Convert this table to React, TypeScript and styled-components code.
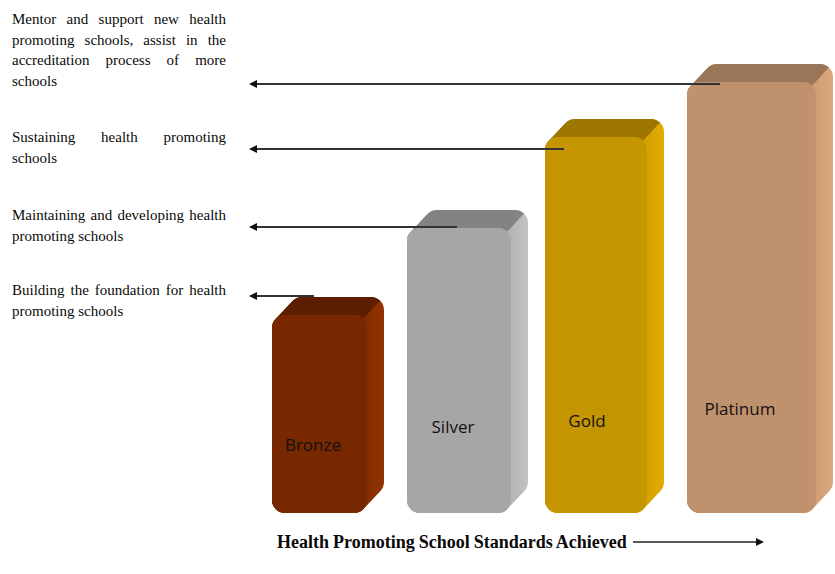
import React from "react";
import styled, { createGlobalStyle } from "styled-components";

const GlobalStyle = createGlobalStyle`
  html, body {
    margin: 0;
    padding: 0;
    background: #ffffff;
  }
  body {
    width: 835px;
    height: 574px;
    overflow: hidden;
    font-family: "Liberation Serif", "Times New Roman", serif;
  }
`;

const Page = styled.div`
  width: 835px;
  height: 574px;
  display: flex;
  flex-direction: column;
`;

const Figure = styled.div`
  display: grid;
  grid-template-columns: 236px 599px;
  height: 520px;
`;

const Notes = styled.div`
  display: flex;
  flex-direction: column;
  padding: 9px 0 0 12px;
`;

const Note = styled.p<{ $gap: number }>`
  margin: ${({ $gap }) => $gap}px 0 0;
  width: 214px;
  font-size: 15px;
  line-height: 20.5px;
  text-align: justify;
  color: #0a0a0a;
`;

const Chart = styled.svg`
  display: block;
`;

const CaptionRow = styled.div`
  display: flex;
  align-items: center;
  gap: 6px;
  padding: 13px 0 0 277px;
`;

const Caption = styled.span`
  font-weight: bold;
  font-size: 18px;
  line-height: 18px;
  word-spacing: -0.5px;
  color: #0a0a0a;
`;

const BarLabel = styled.text`
  font-family: "Open Sans", "Noto Sans", sans-serif;
  font-size: 17px;
  fill: #121212;
`;

type BarSpec = {
  id: string;
  label: string;
  x: number;
  top: number;
  w: number;
  front: string;
  topFace: string;
  sideDark: string;
  sideLight: string;
  labelX: number;
  labelY: number;
};

const BOTTOM = 513;
const R = 13;
const DX = 17;
const DY = -18;

const bars: BarSpec[] = [
  {
    id: "bronze",
    label: "Bronze",
    x: 272,
    top: 315,
    w: 95,
    front: "#772800",
    topFace: "#5b1f00",
    sideDark: "#802c00",
    sideLight: "#923200",
    labelX: 313,
    labelY: 451,
  },
  {
    id: "silver",
    label: "Silver",
    x: 407,
    top: 228,
    w: 104,
    front: "#a6a6a6",
    topFace: "#838383",
    sideDark: "#b0b0b0",
    sideLight: "#c2c2c2",
    labelX: 453,
    labelY: 433,
  },
  {
    id: "gold",
    label: "Gold",
    x: 545,
    top: 137,
    w: 102,
    front: "#c49500",
    topFace: "#9c7600",
    sideDark: "#d19f00",
    sideLight: "#e3ab00",
    labelX: 587,
    labelY: 427,
  },
  {
    id: "platinum",
    label: "Platinum",
    x: 687,
    top: 82,
    w: 129,
    front: "#c0916d",
    topFace: "#9b7557",
    sideDark: "#cc9a73",
    sideLight: "#dca97f",
    labelX: 740,
    labelY: 415,
  },
];

const arrows = [
  { y: 84, end: 720 },
  { y: 149, end: 564 },
  { y: 227, end: 457 },
  { y: 296, end: 314 },
];

const pts = (list: number[][]) => list.map((p) => p.join(",")).join(" ");

const Bar = ({ bar }: { bar: BarSpec }) => {
  const { x, top, w } = bar;
  const hull = [
    [x + R, top + R],
    [x + R + DX, top + R + DY],
    [x + w - R + DX, top + R + DY],
    [x + w - R + DX, BOTTOM - R + DY],
    [x + w - R, BOTTOM - R],
    [x + R, BOTTOM - R],
  ];
  // the top face ends where the front's top-right edge runs back in depth
  const topClip = [
    [x - 40, top + R],
    [x + w - R, top + R],
    [x + w - R + DX * 3, top + R + DY * 3],
    [x - 40, top + R + DY * 3],
  ];

  return (
    <g>
      <defs>
        <linearGradient
          id={`side-${bar.id}`}
          gradientUnits="userSpaceOnUse"
          x1={x + w - 6}
          y1={0}
          x2={x + w + DX}
          y2={0}
        >
          <stop offset="0" stopColor={bar.sideDark} />
          <stop offset="1" stopColor={bar.sideLight} />
        </linearGradient>
        <linearGradient
          id={`front-${bar.id}`}
          gradientUnits="userSpaceOnUse"
          x1={x}
          y1={0}
          x2={x + w}
          y2={0}
        >
          <stop offset="0" stopColor={bar.front} />
          <stop offset="0.88" stopColor={bar.front} />
          <stop offset="1" stopColor={bar.front} stopOpacity="0.88" />
        </linearGradient>
        <clipPath id={`top-${bar.id}`}>
          <polygon points={pts(topClip)} />
        </clipPath>
      </defs>
      <polygon
        points={pts(hull)}
        fill={`url(#side-${bar.id})`}
        stroke={`url(#side-${bar.id})`}
        strokeWidth={2 * R}
        strokeLinejoin="round"
      />
      <polygon
        points={pts(hull)}
        fill={bar.topFace}
        stroke={bar.topFace}
        strokeWidth={2 * R}
        strokeLinejoin="round"
        clipPath={`url(#top-${bar.id})`}
      />
      <rect x={x} y={top} width={w} height={BOTTOM - top} rx={R} fill={bar.sideDark} />
      <rect
        x={x}
        y={top}
        width={w}
        height={BOTTOM - top}
        rx={R}
        fill={`url(#front-${bar.id})`}
      />
      <BarLabel x={bar.labelX} y={bar.labelY} textAnchor="middle">
        {bar.label}
      </BarLabel>
    </g>
  );
};

const LeftArrow = ({ y, end }: { y: number; end: number }) => (
  <g>
    <line x1={255} y1={y} x2={end} y2={y} stroke="#4a4a4a" strokeWidth={2} />
    <line x1={255} y1={y} x2={end} y2={y} stroke="#111111" strokeWidth={0.8} />
    <polygon points={`249,${y} 257,${y - 4} 257,${y + 4}`} fill="#111111" />
  </g>
);

const notes = [
  { gap: 0, text: "Mentor and support new health promoting schools, assist in the accreditation process of more schools" },
  { gap: 36, text: "Sustaining health promoting schools" },
  { gap: 37, text: "Maintaining and developing health promoting schools" },
  { gap: 34, text: "Building the foundation for health promoting schools" },
];

const App = () => {
  return (
    <Page>
      <GlobalStyle />
      <Figure>
        <Notes>
          {notes.map((n) => (
            <Note key={n.text} $gap={n.gap}>
              {n.text}
            </Note>
          ))}
        </Notes>
        <Chart width={599} height={520} viewBox="236 0 599 520">
          {bars.map((b) => (
            <Bar key={b.id} bar={b} />
          ))}
          {arrows.map((a) => (
            <LeftArrow key={a.y} y={a.y} end={a.end} />
          ))}
        </Chart>
      </Figure>
      <CaptionRow>
        <Caption>Health Promoting School Standards Achieved</Caption>
        <svg width={132} height={10} viewBox="0 0 132 10">
          <line x1={0} y1={5} x2={124} y2={5} stroke="#222222" strokeWidth={1.4} />
          <polygon points="131,5 123,1 123,9" fill="#111111" />
        </svg>
      </CaptionRow>
    </Page>
  );
};

export default App;
